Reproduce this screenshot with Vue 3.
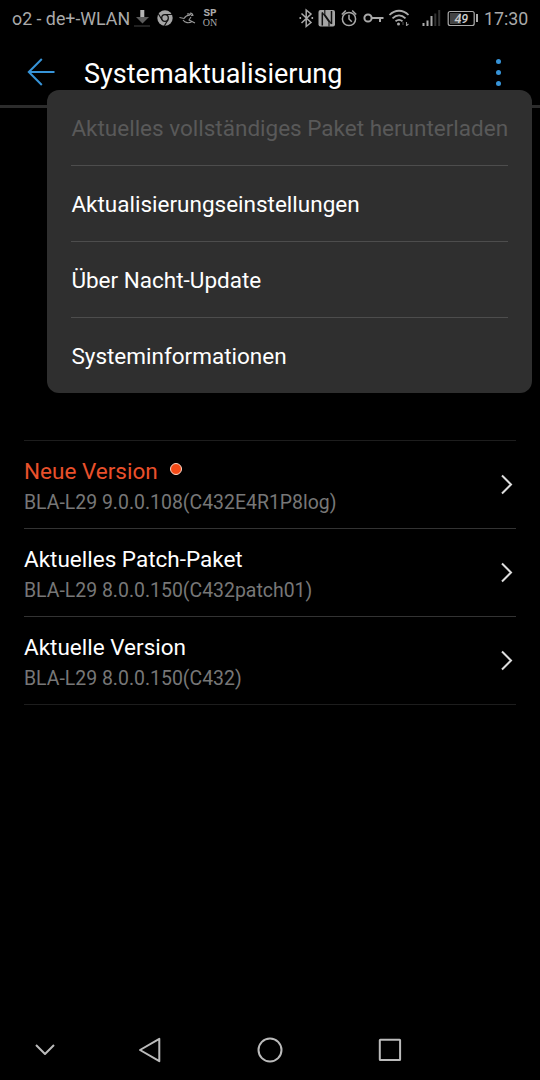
<script setup>
const menu = [
  { label: 'Aktuelles vollständiges Paket herunterladen', disabled: true },
  { label: 'Aktualisierungseinstellungen' },
  { label: 'Über Nacht-Update' },
  { label: 'Systeminformationen' },
]
const versions = [
  { title: 'Neue Version', detail: 'BLA-L29 9.0.0.108(C432E4R1P8log)', fresh: true },
  { title: 'Aktuelles Patch-Paket', detail: 'BLA-L29 8.0.0.150(C432patch01)' },
  { title: 'Aktuelle Version', detail: 'BLA-L29 8.0.0.150(C432)' },
]
</script>

<template>
  <main class="phone">
    <div class="status">
      <span class="carrier">o2 - de+-WLAN</span>
      <svg class="notices" width="66" height="36" viewBox="134 0 66 36">
        <path d="M140.300 10h4v7h-4z" fill="#b5b5b5" />
        <path d="M136 17h13l-6.500 6.500z" fill="#5c5c5c" />
        <path d="M134 26h16" stroke="#333" stroke-width="1.300" />
        <circle cx="165" cy="18" r="7.700" fill="#a5a5a5" />
        <circle cx="165" cy="18" r="3.300" fill="#a5a5a5" stroke="#111" stroke-width="1.300" />
        <path d="M165 14.500h7M162 19.800l-3.700-6M168 19.800l-3.600 6" stroke="#111" stroke-width="1.200" />
        <path d="M179.500 17.500l4.500 1c2-3 4-3.600 6-3.300M183 20c2 3 6 3.500 9 1.500M187 14c2-.5 4 0 5 2M190 13c2 .2 3 1.500 3 3M191 17l-2 3 6 3" fill="none" stroke="#999" stroke-width="1.100" />
      </svg>
      <span class="sp"><b>SP</b><span>ON</span></span>
      <svg class="system" width="178" height="36" viewBox="298 0 178 36" fill="none" stroke="#aaa" stroke-width="1.500">
        <path d="M301.500 13.500l9.500 9-4.800 4V10l4.800 4-9.500 9" />
        <path d="M299.500 18h1.600M311.500 18h1.600" stroke-width="2" />
        <rect x="318.500" y="10" width="16.500" height="16.500" rx="2" fill="#a5a5a5" stroke="none" />
        <path d="M322.300 25.500V12.500M331.500 11v13" stroke="#111" stroke-width="1.500" />
        <path d="M324.800 10v4.500l6.700 9.500M322.300 12.500l6.700 9.500v4.500" stroke="#111" stroke-width="1.100" />
        <circle cx="349" cy="19" r="6.600" />
        <path d="M349 14.800V19l2.800 2.700M341.800 14.500l4-4M352.200 10.500l4 4" />
        <circle cx="368" cy="18" r="3.600" stroke-width="2" />
        <path d="M371.500 18H383.500M380 18v4" stroke-width="2" />
        <path d="M389.500 15c5.500-5.700 13.500-5.700 19 0M392.500 18.300c4-3.800 9-3.800 13 0M395.500 21.300c2.300-1.800 4.700-1.800 7 0" stroke-width="1.800" />
        <circle cx="398.500" cy="24" r="1.500" fill="#aaa" stroke="none" />
        <path d="M403 22v3" stroke="#555" stroke-width="1" />
        <path d="M406.500 22v4M406.500 25.500l2-1.500" stroke="#999" stroke-width="1.100" />
        <path d="M423.500 26v-3M427.500 26v-5.500M431.500 26V16" stroke-width="2" />
        <path d="M435.300 26V13.500M439.200 26V10" stroke="#333" stroke-width="2" />
        <rect x="450" y="13" width="11" height="11" fill="#444" stroke="none" />
        <rect x="448.200" y="11.500" width="26" height="14" rx="2" stroke-width="1.200" />
        <text x="461.300" y="23" text-anchor="middle">49</text>
      </svg>
      <i class="cap"></i>
      <span class="clock">17:30</span>
    </div>

    <header class="bar">
      <svg class="back" width="28" height="30" viewBox="0 0 28 30">
        <path d="M27.500 15H1.500M14.800 2l-13 13 13 13" fill="none" stroke="#3794d8" stroke-width="2" />
      </svg>
      <h1>Systemaktualisierung</h1>
      <div class="more"><i></i><i></i><i></i></div>
      <ul class="menu">
        <li v-for="item in menu" :key="item.label" :class="{ disabled: item.disabled }">
          <span>{{ item.label }}</span>
        </li>
      </ul>
    </header>

    <section class="list">
      <article v-for="v in versions" :key="v.title">
        <div>
          <h2 :class="{ fresh: v.fresh }"><span>{{ v.title }}</span><i v-if="v.fresh"></i></h2>
          <p>{{ v.detail }}</p>
        </div>
        <svg width="14" height="22" viewBox="0 0 14 22">
          <path d="M2 1.500l9 9-9 9" fill="none" stroke="#ddd" stroke-width="2" />
        </svg>
      </article>
    </section>

    <nav>
      <svg width="540" height="60" viewBox="0 1020 540 60" fill="none" stroke="#bbb" stroke-width="2" stroke-linejoin="round">
        <path d="M36 1045l9 9 9-9" />
        <path d="M159.300 1038.800v22.400L140 1050z" />
        <circle cx="270" cy="1050" r="11.500" />
        <rect x="379.800" y="1039.800" width="20.300" height="20.300" rx=".5" />
      </svg>
    </nav>
  </main>
</template>

<style>
body { background: #000; }
</style>

<style scoped>
* { box-sizing: border-box; margin: 0; padding: 0; }
.phone {
  width: 540px; height: 1080px; background: #000; color: #fff;
  font-family: Roboto, sans-serif; display: flex; flex-direction: column; overflow: hidden;
}
.status { height: 36px; display: flex; align-items: center; padding-left: 12px; color: #aaa; font-size: 17.800px; }
.carrier { width: 122px; white-space: nowrap; }
.notices, .system { flex: none; }
.sp { width: 20px; display: flex; flex-direction: column; align-items: center; font: 10px/10px "Liberation Serif", serif; }
.sp b { font: bold 11px/10px "Liberation Mono", monospace; }
.system { margin-left: 78px; }
.system text { font: italic 500 12.5px Roboto, sans-serif; fill: #ccc; stroke: none; }
.cap { width: 2px; height: 8px; background: #aaa; }
.clock { margin-left: 6px; }
.bar { height: 72px; border-bottom: 3px solid #2c2c2c; position: relative; display: flex; align-items: center; padding-left: 27px; }
.back { margin-top: 3px; }
h1 { font-size: 27px; font-weight: 400; line-height: 32px; margin: 6px 0 0 29px; white-space: nowrap; }
.more { margin: 3px 39.500px 0 auto; display: flex; flex-direction: column; gap: 6px; }
.more i { width: 5px; height: 5px; border-radius: 50%; background: #3794d8; }
.menu { position: absolute; top: 54px; left: 47.400px; width: 485px; height: 303px; border-radius: 12px; background: #2f2f2f; padding: 0 24px; list-style: none; z-index: 1; }
.menu li { height: 76px; border-bottom: 1px solid #4d4d4d; display: flex; align-items: center; font-size: 22.500px; white-space: nowrap; }
.menu li:last-child { border-bottom: 0; }
.menu .disabled { color: #595959; }
.list { margin: 332px 24px 0; border-top: 1px solid #1d1d1d; }
article { height: 88px; border-bottom: 1px solid #333; display: flex; align-items: center; justify-content: space-between; }
article:last-child { border-color: #1d1d1d; }
article > div { padding-top: 3px; }
article svg { margin-right: 2px; }
h2 { font-size: 22.500px; line-height: 30px; font-weight: 400; display: flex; align-items: center; }
h2 i { width: 12px; height: 12px; border-radius: 50%; background: #f44a17; border: 1px solid #ffd8c8; margin: 0 0 3px 12px; }
.fresh { color: #e9502b; }
p { font-size: 19.450px; line-height: 28px; color: #777; margin-top: 3px; }
nav { margin-top: auto; height: 60px; }
</style>
